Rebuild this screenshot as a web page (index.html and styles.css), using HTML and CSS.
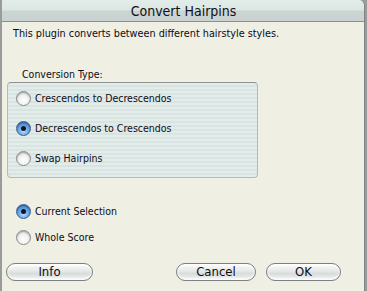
FILE: index.html
```html
<!DOCTYPE html>
<html>
<head>
<meta charset="utf-8">
<link rel="stylesheet" href="styles.css">
</head>
<body>
<div class="window">
  <div class="titlebar"><span class="title">Convert Hairpins</span></div>
  <div class="content">
    <p class="desc">This plugin converts between different hairstyle styles.</p>
    <div class="group-label">Conversion Type:</div>
    <div class="group">
      <div class="radio-row"><span class="radio"></span><span class="label">Crescendos to Decrescendos</span></div>
      <div class="radio-row"><span class="radio checked"></span><span class="label">Decrescendos to Crescendos</span></div>
      <div class="radio-row"><span class="radio"></span><span class="label">Swap Hairpins</span></div>
    </div>
    <div class="scope">
      <div class="radio-row small"><span class="radio checked"></span><span class="label">Current Selection</span></div>
      <div class="radio-row small"><span class="radio"></span><span class="label">Whole Score</span></div>
    </div>
    <div class="buttons">
      <button class="btn btn-info">Info</button>
      <div class="spacer"></div>
      <button class="btn btn-cancel">Cancel</button>
      <button class="btn btn-ok">OK</button>
    </div>
  </div>
</div>
</body>
</html>
```
FILE: styles.css
```css
html, body {
  margin: 0;
  padding: 0;
}
body {
  background: #9a9c9c;
  width: 367px;
  height: 291px;
  overflow: hidden;
  font-family: "DejaVu Sans Condensed", "DejaVu Sans", "Liberation Sans", sans-serif;
  font-stretch: condensed;
  color: #0c0c18;
}
.window {
  margin-left: 2px;
  width: 362px;
  height: 291px;
  background: #efefe3;
  border-right: 1px solid #7e8484;
  border-top-right-radius: 6px;
  overflow: hidden;
}
.titlebar {
  height: 21px;
  border-bottom: 1px solid #8a9090;
  background: linear-gradient(#e2ede9 0, #dbe7e4 10px, #ccd4d3 11px, #cbd3d2 21px);
  display: flex;
  justify-content: center;
  align-items: center;
}
.title {
  font-size: 14px;
  color: #111;
  margin-left: 1px;
}
.content {
  padding: 0 0 0 5px;
}
.desc {
  margin: 5px 0 0 6px;
  font-size: 10.75px;
  line-height: 13px;
}
.group-label {
  margin: 28px 0 0 15px;
  font-size: 10.5px;
  line-height: 13px;
}
.group {
  margin-top: 1px;
  width: 249px;
  height: 94px;
  border: 1px solid #b4bab9;
  border-top-color: #8e9292;
  border-radius: 4px;
  background: repeating-linear-gradient(#e4ecea 0 2px, #d8e4e2 2px 4px);
}
.radio-row {
  height: 30px;
  display: flex;
  align-items: center;
  padding-left: 8px;
  font-size: 10.5px;
}
.radio-row.small {
  height: 26px;
  padding-left: 9px;
}
.radio {
  width: 13px;
  height: 13px;
  border-radius: 50%;
  border: 1px solid #8a8c8c;
  background: radial-gradient(circle at 50% 65%, #ffffff 0, #f2f2f2 45%, #c8c8c8 100%);
  box-shadow: inset 0 1px 1px rgba(0,0,0,0.25);
  position: relative;
  flex: none;
}
.radio.checked {
  border-color: #3d5f8c;
  background: radial-gradient(circle at 50% 70%, #b4dcff 0, #6aa6e6 45%, #2f68b8 100%);
  box-shadow: inset 0 1px 1px rgba(0,0,40,0.3);
}
.radio.checked::after {
  content: "";
  position: absolute;
  left: 4px;
  top: 4px;
  width: 5px;
  height: 5px;
  border-radius: 50%;
  background: #101628;
}
.label {
  margin-left: 4px;
}
.scope {
  margin-top: 20px;
}
.buttons {
  display: flex;
  margin-top: 13px;
  margin-left: -1px;
}
.spacer {
  flex: none;
  width: 83px;
}
.btn {
  height: 18px;
  padding: 0;
  border: 1px solid #7c8080;
  border-radius: 9px;
  background: linear-gradient(#fafafa 0, #e8ebea 40%, #d8dcdb 60%, #f2f4f4 100%);
  box-shadow: inset 0 -2px 2px rgba(255,255,255,0.7), inset 0 2px 2px rgba(255,255,255,0.8);
  font-family: "DejaVu Sans Condensed", "DejaVu Sans", "Liberation Sans", sans-serif;
  font-stretch: condensed;
  font-size: 13px;
  line-height: 16px;
  color: #0c0c18;
  box-sizing: border-box;
}
.btn-info { width: 87px; }
.btn-cancel { width: 80px; }
.btn-ok { width: 75px; margin-left: 10px; }
```
